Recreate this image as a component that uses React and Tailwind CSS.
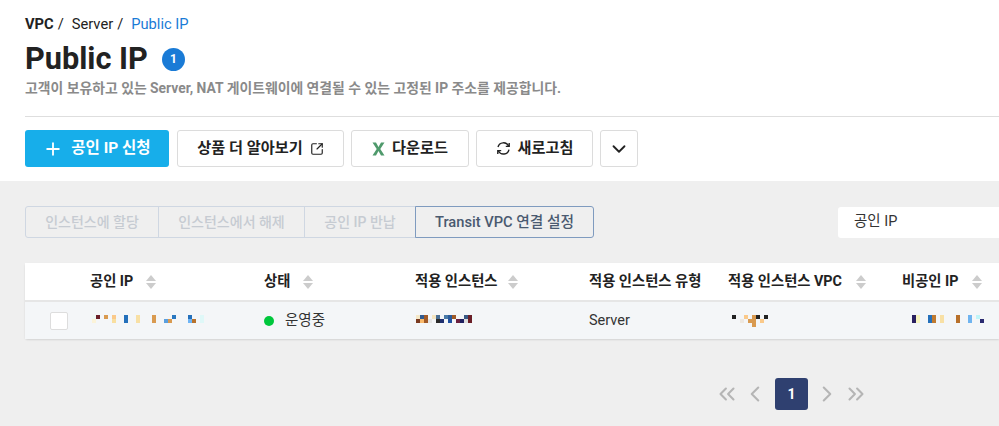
import React from "react";
import { Plus, SquareArrowOutUpRight, ChevronDown, ChevronLeft, ChevronRight, ChevronsLeft, ChevronsRight } from "lucide-react";

const FONT = "font-['Roboto','Noto_Sans_CJK_KR',sans-serif]";

// blurred values in the table, [x, y, color] in 4px cells
const ipCells = [
    [0, 0, "#eef8f5"], [1, 0, "#6b1f28"], [3, 0, "#d99a50"], [5, 0, "#fac98a"], [8, 0, "#2470bb"], [11, 0, "#f8e0a5"], [15, 0, "#d99a50"], [20, 0, "#2a78c0"], [24, 0, "#2470bb"], [27, 0, "#dff8f8"],
    [0, 1, "#fbf3d8"], [5, 1, "#f9dfa0"], [8, 1, "#2470bb"], [11, 1, "#f8e0a5"], [15, 1, "#d99a50"], [18, 1, "#5a9fdf"], [19, 1, "#d99a50"], [24, 1, "#6eb4f5"], [25, 1, "#b8722c"], [27, 1, "#dff8f8"],
];
const instanceCells = [
    [0, 0, "#f5e8c8"], [1, 0, "#2f5a90"], [2, 0, "#a05a28"], [4, 0, "#f5e5c0"], [5, 0, "#4a6f95"], [7, 0, "#4a7aa8"], [8, 0, "#2a5a9a"], [9, 0, "#a05a28"], [12, 0, "#3a5a85"], [13, 0, "#6b1f28"], [14, 0, "#eef8f8"],
    [0, 1, "#7a3a20"], [1, 1, "#fab96a"], [2, 1, "#a05a28"], [3, 1, "#e5e5e5"], [5, 1, "#2a2a2a"], [6, 1, "#1f3070"], [8, 1, "#2050a0"], [10, 1, "#6b2040"], [11, 1, "#1f2060"], [12, 1, "#dddddd"], [13, 1, "#6b1f28"],
];
const vpcCells = [
    [0, 0, "#222222"], [3, 0, "#fac98a"], [5, 0, "#d99a50"], [6, 0, "#222222"], [8, 0, "#222222"],
    [2, 1, "#eee8e0"], [4, 1, "#d99a50"], [5, 1, "#d99a50"], [7, 1, "#fac98a"],
    [5, 2, "#d99a50"],
];
const privateIpCells = [
    [0, 0, "#2a2060"], [1, 0, "#f8f5c0"], [4, 0, "#2470bb"], [5, 0, "#c07a30"], [7, 0, "#f8e0a5"], [11, 0, "#b8702a"], [14, 0, "#70b4f0"], [16, 0, "#c0f5f8"],
    [0, 1, "#2a2060"], [1, 1, "#f8f5c0"], [4, 1, "#2470bb"], [5, 1, "#c07a30"], [7, 1, "#f8e0a5"], [11, 1, "#b8702a"], [14, 1, "#70b4f0"], [17, 1, "#2a2a70"],
];

const Blur = ({ cells, cols, className }) => (
    <svg width={cols * 4} height={12} className={className}>
        {cells.map(([x, y, color]) => (
            <rect key={`${x}-${y}`} x={x * 4} y={y * 4} width={4} height={4} fill={color} />
        ))}
    </svg>
);

const SortIcon = ({ className }) => (
    <svg width="10" height="14" viewBox="0 0 10 14" className={className}>
        <path d="M5 0 L10 6 L0 6 Z" fill="#cccccc" />
        <path d="M0 8 L10 8 L5 14 Z" fill="#cccccc" />
    </svg>
);

const RefreshIcon = () => (
    <svg width="15" height="15" viewBox="0 0 15 15" fill="none" stroke="#222222" strokeWidth="1.4">
        <path d="M2 6 A5.7 5.7 0 0 1 12.6 5" />
        <path d="M13 8.6 A5.7 5.7 0 0 1 2.4 10" />
        <path d="M13.2 2 V5.4 H9.8" fill="none" />
        <path d="M1.8 13 V9.6 H5.2" fill="none" />
    </svg>
);

const ExcelIcon = () => (
    <svg width="13" height="14" viewBox="0 0 13 14">
        <path d="M0.5 0.5 H4 L6.5 5 L9 0.5 H12.5 L8.3 7 L12.5 13.5 H9 L6.5 9 L4 13.5 H0.5 L4.7 7 Z" fill="#4f9a6c" />
    </svg>
);

const ActionButton = ({ className, children }) => (
    <button className={`h-[37px] flex items-center justify-center bg-white border border-[#dcdcdc] rounded-[3px] text-[15.2px] font-bold text-[#222222] ${className}`}>
        {children}
    </button>
);

const HeaderCell = ({ label, sort, gap = "ml-3" }) => (
    <div className="flex items-center text-[14.3px] font-bold text-[#222222] whitespace-nowrap">
        {label}
        {sort && <SortIcon className={gap} />}
    </div>
);

const App = () => {
    return (
        <div className={`w-[999px] h-[426px] overflow-hidden bg-[#efefef] ${FONT}`}>
            <div className="h-[181px] bg-white pl-[25px] pt-[15px]">
                <div className="flex text-[14.7px] leading-[18px] text-[#222222]">
                    <span className="font-bold">VPC</span>
                    <span className="ml-1">/</span>
                    <span className="ml-[8px]">Server</span>
                    <span className="ml-1">/</span>
                    <span className="ml-[8px] text-[#1a7bd6]">Public IP</span>
                </div>
                <div className="flex items-center mt-[8px] h-[36px]">
                    <h1 className="text-[30.7px] font-bold leading-[36px] text-[#222222]">Public IP</h1>
                    <span className="ml-[14px] w-[23px] h-[23px] rounded-full bg-[#1a7bd6] text-white text-[12px] font-bold flex items-center justify-center">1</span>
                </div>
                <p className="text-[13.87px] leading-[18px] font-bold text-[#8a8a8a] mt-[2px]">
                    고객이 보유하고 있는 Server, NAT 게이트웨이에 연결될 수 있는 고정된 IP 주소를 제공합니다.
                </p>
                <div className="h-px bg-[#dedede] mt-[19px]" />
                <div className="flex mt-[13px]">
                    <button className="w-[144px] h-[37px] flex items-center justify-center bg-[#17aeea] rounded-[3px] text-[15.5px] font-bold text-white">
                        <Plus size={20} strokeWidth={2.2} className="mr-[8px]" />
                        공인 IP 신청
                    </button>
                    <div className="flex gap-[7px] ml-[8px]">
                        <ActionButton className="w-[167px]">
                            상품 더 알아보기
                            <SquareArrowOutUpRight size={14} strokeWidth={2} className="ml-[7px]" />
                        </ActionButton>
                        <ActionButton className="w-[118px]">
                            <ExcelIcon />
                            <span className="ml-[7px]">다운로드</span>
                        </ActionButton>
                        <ActionButton className="w-[117px]">
                            <RefreshIcon />
                            <span className="ml-[7px]">새로고침</span>
                        </ActionButton>
                        <ActionButton className="w-[38px]">
                            <ChevronDown size={22} strokeWidth={2} />
                        </ActionButton>
                    </div>
                </div>
            </div>

            <div className="pl-[25px] pt-[25px]">
                <div className="flex justify-between items-center">
                    <div className="flex h-[32px] text-[14px] font-medium text-[#c6cbd2]">
                        <div className="w-[134px] flex items-center justify-center border border-[#cfd7e2] rounded-l-[3px]">인스턴스에 할당</div>
                        <div className="w-[147px] -ml-px flex items-center justify-center border border-[#cfd7e2]">인스턴스에서 해제</div>
                        <div className="w-[112px] -ml-px flex items-center justify-center border border-[#cfd7e2]">공인 IP 반납</div>
                        <div className="w-[179px] -ml-px flex items-center justify-center border border-[#7f9bbf] rounded-r-[3px] text-[14.7px] text-[#4a5a70]">Transit VPC 연결 설정</div>
                    </div>
                    <div className="w-[161px] h-[31px] bg-white rounded-l-[3px] flex items-center pl-4 text-[14.5px] text-[#333333]">공인 IP</div>
                </div>

                <div className="mt-[25px] rounded-l-[3px] shadow-[0_1px_2px_rgba(0,0,0,0.12)]">
                    <div className="grid grid-cols-[65px_174px_151px_174px_139px_174px_1fr] h-[39px] items-center bg-white border-b-2 border-[#e6e6e6]">
                        <div />
                        <HeaderCell label="공인 IP" sort gap="ml-[13px]" />
                        <HeaderCell label="상태" sort gap="ml-[13px]" />
                        <HeaderCell label="적용 인스턴스" sort gap="ml-[11px]" />
                        <HeaderCell label="적용 인스턴스 유형" />
                        <HeaderCell label="적용 인스턴스 VPC" sort gap="ml-[14px]" />
                        <HeaderCell label="비공인 IP" sort gap="ml-[14px]" />
                    </div>
                    <div className="grid grid-cols-[65px_174px_151px_174px_139px_174px_1fr] h-[37px] items-center bg-[#f4f6f8] text-[14.5px] text-[#333333]">
                        <div className="pl-[25px] flex items-center">
                            <span className="w-[18px] h-[18px] bg-white border border-[#dddddd] rounded-[2px]" />
                        </div>
                        <div className="pl-[2px]"><Blur cells={ipCells} cols={28} /></div>
                        <div className="flex items-center">
                            <span className="w-[10px] h-[10px] rounded-full bg-[#00c73c] mr-[11px]" />
                            운영중
                        </div>
                        <div className="pl-[1px]"><Blur cells={instanceCells} cols={15} /></div>
                        <div>Server</div>
                        <div className="pl-[4px]"><Blur cells={vpcCells} cols={9} /></div>
                        <div className="pl-[10px]"><Blur cells={privateIpCells} cols={18} /></div>
                    </div>
                </div>

                <div className="flex items-center mt-[39px] pl-[689px] text-[#b5b5b5]">
                    <ChevronsLeft size={26} strokeWidth={1.9} />
                    <ChevronLeft size={26} strokeWidth={1.9} className="ml-[2px]" />
                    <span className="ml-[7px] w-[33px] h-[32px] flex items-center justify-center bg-[#2f4070] rounded-[3px] text-white text-[14px] font-bold">1</span>
                    <ChevronRight size={26} strokeWidth={1.9} className="ml-[6px]" />
                    <ChevronsRight size={26} strokeWidth={1.9} className="ml-[3px]" />
                </div>
            </div>
        </div>
    );
};

export default App;
